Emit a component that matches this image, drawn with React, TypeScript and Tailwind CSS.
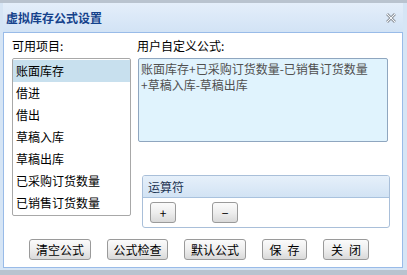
import React from "react";

const items = ["账面库存", "借进", "借出", "草稿入库", "草稿出库", "已采购订货数量", "已销售订货数量"];

const Btn: React.FC<{ label: string; className?: string }> = ({ label, className = "" }) => (
  <button
    className={`h-[21px] flex items-center justify-center whitespace-pre rounded-[3px] border border-[#9a9a9a] bg-gradient-to-b from-[#fbfbfb] via-[#eeeeee] to-[#d9d9d9] text-[12px] leading-none text-black ${className}`}
  >
    {label}
  </button>
);

export default function App() {
  return (
    <div
      className="w-[407px] h-[275px] flex flex-col bg-[#c4ccd6] overflow-hidden"
      style={{ fontFamily: '"Noto Sans CJK SC", "Liberation Sans", sans-serif' }}
    >
      {/* page strip behind the dialog */}
      <div className="h-[3px] bg-[#b9c3cf]" />

      <div className="flex-1 flex flex-col bg-[#d6e5f5] pl-[3px] pr-[4px] pb-[2px]">
        {/* title bar */}
        <div className="h-[29px] flex items-center justify-between pl-[3px] pr-[7px] bg-gradient-to-b from-[#e4eefa] to-[#d2e3f5]">
          <span className="text-[12px] font-bold text-[#15428b]">虚拟库存公式设置</span>
          <svg width="10" height="10" viewBox="0 0 10 10">
            <path d="M1 1 L9 9 M9 1 L1 9" stroke="#9aa0a8" strokeWidth="3" />
            <path d="M1 1 L9 9 M9 1 L1 9" stroke="#f4f6f8" strokeWidth="1" />
          </svg>
        </div>

        {/* body */}
        <div className="h-[236px] bg-white border border-[#99bbe8] pt-[7px] pl-[8px] text-[12px] text-black">
          <div className="flex h-[188px]">
            {/* left column */}
            <div className="w-[119px] flex flex-col">
              <div className="h-[18px] leading-[12px]">可用项目:</div>
              <div className="h-[158px] border border-[#a8a8a8] rounded-[2px] pt-[1px]">
                {items.map((it, i) => (
                  <div
                    key={it}
                    className={`h-[22px] flex items-center pl-[3px] ${i === 0 ? "bg-[#c8e0ee]" : ""}`}
                  >
                    {it}
                  </div>
                ))}
              </div>
            </div>

            {/* right column */}
            <div className="flex flex-col pl-[6px]">
              <div className="h-[18px] leading-[12px]">用户自定义公式:</div>
              <div className="ml-[1px] w-[250px] h-[84px] border border-[#8fa6bf] rounded-[2px] bg-[#e0f3fd] px-[2px] pt-[2px] text-[#505050] leading-[16px]">
                <div>账面库存+已采购订货数量-已销售订货数量</div>
                <div>+草稿入库-草稿出库</div>
              </div>

              <div className="mt-[33px] ml-[5px] w-[248px] h-[53px] border border-[#a9bfd9] rounded-[3px] flex flex-col overflow-hidden">
                <div className="h-[22px] flex items-center pl-[5px] bg-gradient-to-b from-[#e6f0fa] to-[#d2e3f4] border-b border-[#a9c2de] text-[#1d3553]">
                  运算符
                </div>
                <div className="flex-1 flex items-center pl-[7px] gap-[36px]">
                  <Btn label="+" className="w-[26px] h-[20px]" />
                  <Btn label="−" className="w-[26px] h-[20px]" />
                </div>
              </div>
            </div>
          </div>

          {/* bottom buttons */}
          <div className="mt-[11px] flex pl-[17px] gap-[16px]">
            <Btn label="清空公式" className="w-[62px]" />
            <Btn label="公式检查" className="w-[61px]" />
            <Btn label="默认公式" className="w-[62px]" />
            <Btn label={"保\u2002存"} className="w-[45px]" />
            <Btn label={"关\u2002闭"} className="w-[46px]" />
          </div>
        </div>
      </div>

      <div className="h-[5px] bg-[#b9c3cf]" />
    </div>
  );
}
